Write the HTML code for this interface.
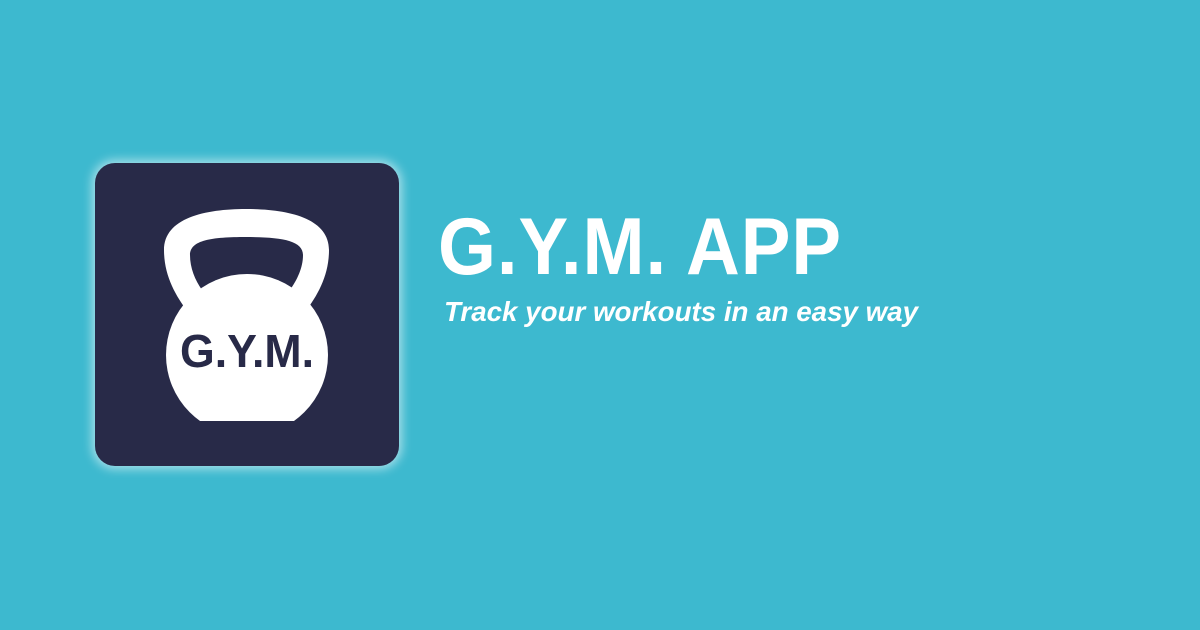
<!DOCTYPE html>
<html><head><style>
html,body{margin:0;padding:0}
body{width:1200px;height:630px;background:#3db9cf;position:relative;overflow:hidden;font-family:"Liberation Sans",sans-serif}
.icon{position:absolute;left:95px;top:163px;width:304px;height:303px;background:#282a48;border-radius:20px;box-shadow:0 0 10px 3px rgba(255,255,255,0.55)}
.t1{position:absolute;left:438px;top:201px;font-size:81px;font-weight:bold;color:#fff;white-space:nowrap;transform:scaleX(0.92);transform-origin:left top;letter-spacing:1px}
.t2{position:absolute;left:444px;top:296px;font-size:28px;font-weight:bold;font-style:italic;color:#fff;white-space:nowrap;transform:scaleX(0.99);transform-origin:left top}
</style></head><body>
<div class="icon"></div>
<svg width="1200" height="630" style="position:absolute;left:0;top:0">
<defs><clipPath id="c"><rect x="0" y="0" width="1200" height="421"/></clipPath></defs>
<path fill="#fff" fill-rule="evenodd" d="M246 209 C205 209 164 218 164 250 C164 275 175 295 188 312 L305 312 C318 295 329 275 329 250 C329 218 288 209 246 209 Z M246 237 C280 237 303 240 303 255 C303 268 297 280 290 290 L202 290 C195 280 190 268 190 255 C190 240 212 237 246 237 Z"/>
<circle cx="247" cy="355" r="81" fill="#fff" clip-path="url(#c)"/>
<text x="247" y="367" text-anchor="middle" font-family="Liberation Sans" font-weight="bold" font-size="46" fill="#282a48" textLength="134" lengthAdjust="spacingAndGlyphs">G.Y.M.</text>
</svg>
<div class="t1">G.Y.M. APP</div>
<div class="t2">Track your workouts in an easy way</div>
</body></html>
